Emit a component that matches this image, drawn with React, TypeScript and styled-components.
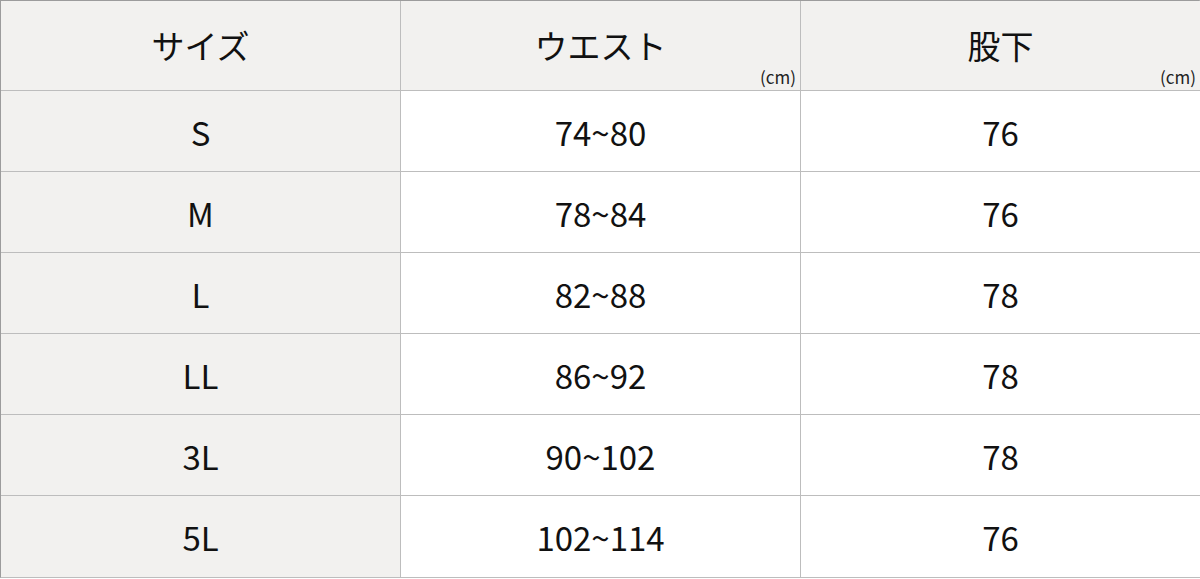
import React from "react";
import styled, { createGlobalStyle } from "styled-components";

const Global = createGlobalStyle`
  html, body { margin: 0; padding: 0; background: #fff; }
  body { font-family: "Noto Sans CJK JP", "Noto Sans", sans-serif; color: #111; }
`;

const Table = styled.div`
  display: grid;
  grid-template-columns: 400px 400px 399px;
  grid-template-rows: 90px repeat(6, 81px);
  width: 1200px;
  box-sizing: border-box;
  border-top: 1px solid #9c9c9c;
  border-left: 1px solid #9c9c9c;
  border-right: 1px solid #bdbdbd;
  border-bottom: 1px solid #bdbdbd;
`;

const Cell = styled.div<{ $shade?: boolean; $last?: boolean; $bottom?: boolean }>`
  position: relative;
  display: flex;
  align-items: center;
  justify-content: center;
  background: ${(p) => (p.$shade ? "#f2f1ef" : "#ffffff")};
  border-right: ${(p) => (p.$last ? "none" : "1px solid #bdbdbd")};
  border-bottom: ${(p) => (p.$bottom ? "none" : "1px solid #bdbdbd")};
  font-size: 33px;
  line-height: 1;
  color: #111;
`;

const BodyText = styled.span`
  transform: translateY(1px);
`;

const HeadText = styled.span`
  font-size: 33px;
`;

const Unit = styled.span`
  position: absolute;
  right: 4px;
  bottom: 5px;
  font-size: 17px;
  color: #222;
`;

const rows = [
  ["S", "74~80", "76"],
  ["M", "78~84", "76"],
  ["L", "82~88", "78"],
  ["LL", "86~92", "78"],
  ["3L", "90~102", "78"],
  ["5L", "102~114", "76"],
];

export default function App() {
  return (
    <>
      <Global />
      <Table>
        <Cell $shade>
          <HeadText>サイズ</HeadText>
        </Cell>
        <Cell $shade>
          <HeadText>ウエスト</HeadText>
          <Unit>(cm)</Unit>
        </Cell>
        <Cell $shade $last>
          <HeadText>股下</HeadText>
          <Unit>(cm)</Unit>
        </Cell>
        {rows.map((r, i) => {
          const bottom = i === rows.length - 1;
          return (
            <React.Fragment key={r[0]}>
              <Cell $shade $bottom={bottom}>
                <BodyText>{r[0]}</BodyText>
              </Cell>
              <Cell $bottom={bottom}>
                <BodyText>{r[1]}</BodyText>
              </Cell>
              <Cell $last $bottom={bottom}>
                <BodyText>{r[2]}</BodyText>
              </Cell>
            </React.Fragment>
          );
        })}
      </Table>
    </>
  );
}
